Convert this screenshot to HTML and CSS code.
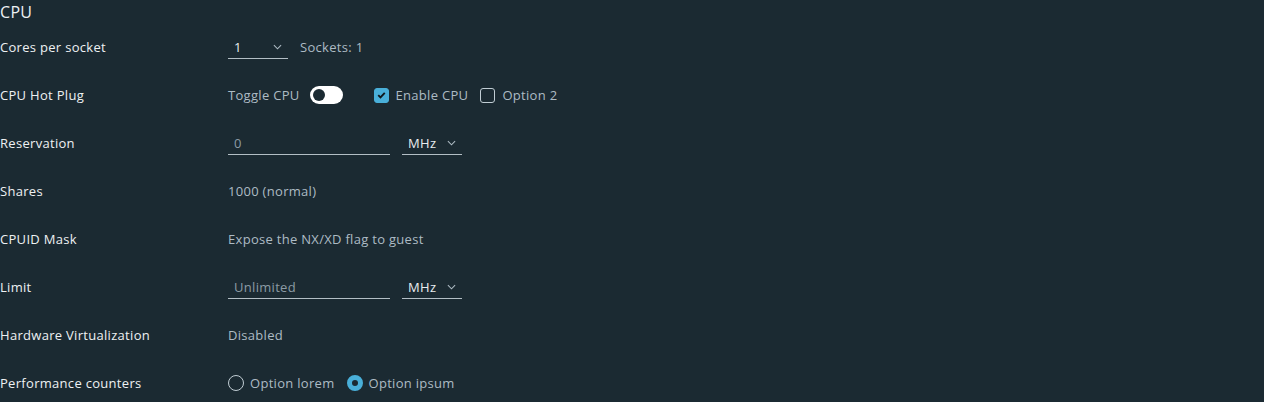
FILE: index.html
```html
<!DOCTYPE html>
<html>
<head>
<meta charset="utf-8">
<link rel="stylesheet" href="styles.css">
</head>
<body>
<h2 class="title">CPU</h2>
<div class="form">
  <div class="row">
    <div class="label">Cores per socket</div>
    <div class="control">
      <div class="select small"><span>1</span><svg class="chev" viewBox="0 0 10 6"><path d="M1 1l4 4 4-4"/></svg></div>
      <span class="text">Sockets: 1</span>
    </div>
  </div>
  <div class="row">
    <div class="label">CPU Hot Plug</div>
    <div class="control">
      <span class="text">Toggle CPU</span>
      <span class="toggle"><span class="knob"></span></span>
      <span class="check-group">
        <span class="checkbox checked"><svg viewBox="0 0 14 14"><path d="M3.5 7.2l2.4 2.4 4.6-5"/></svg></span>
        <span class="text">Enable CPU</span>
      </span>
      <span class="check-group">
        <span class="checkbox"></span>
        <span class="text">Option 2</span>
      </span>
    </div>
  </div>
  <div class="row">
    <div class="label">Reservation</div>
    <div class="control">
      <div class="input"><span class="placeholder">0</span></div>
      <div class="select small unit"><span>MHz</span><svg class="chev" viewBox="0 0 10 6"><path d="M1 1l4 4 4-4"/></svg></div>
    </div>
  </div>
  <div class="row">
    <div class="label">Shares</div>
    <div class="control"><span class="text">1000 (normal)</span></div>
  </div>
  <div class="row">
    <div class="label">CPUID Mask</div>
    <div class="control"><span class="text">Expose the NX/XD flag to guest</span></div>
  </div>
  <div class="row">
    <div class="label">Limit</div>
    <div class="control">
      <div class="input"><span class="placeholder">Unlimited</span></div>
      <div class="select small unit"><span>MHz</span><svg class="chev" viewBox="0 0 10 6"><path d="M1 1l4 4 4-4"/></svg></div>
    </div>
  </div>
  <div class="row">
    <div class="label">Hardware Virtualization</div>
    <div class="control"><span class="text">Disabled</span></div>
  </div>
  <div class="row">
    <div class="label">Performance counters</div>
    <div class="control">
      <span class="radio-group"><span class="radio"></span><span class="text">Option lorem</span></span>
      <span class="radio-group"><span class="radio checked"></span><span class="text">Option ipsum</span></span>
    </div>
  </div>
</div>
</body>
</html>
```
FILE: styles.css
```css
html, body {
  margin: 0;
  padding: 0;
  background: #1b2a32;
}
body {
  font-family: "Open Sans", "Noto Sans", sans-serif;
  font-size: 13px;
  letter-spacing: 0.3px;
  color: #e9ecef;
  width: 1264px;
  height: 402px;
  overflow: hidden;
}
.title {
  margin: 0;
  font-weight: 400;
  font-size: 16px;
  line-height: 24px;
  height: 24px;
  color: #eef1f3;
}
.form {
  display: flex;
  flex-direction: column;
  padding-top: 11px;
}
.row {
  display: flex;
  align-items: center;
  height: 24px;
  margin-bottom: 24px;
}
.label {
  width: 228px;
  flex: none;
  color: #eef1f3;
}
.control {
  display: flex;
  align-items: center;
  color: #adbbc4;
}
.text {
  color: #adbbc4;
}
.select {
  display: flex;
  align-items: center;
  justify-content: space-between;
  width: 60px;
  height: 24px;
  box-sizing: border-box;
  padding: 0 6px;
  border-bottom: 1px solid #b3bec5;
  color: #e9ecef;
  margin-right: 12px;
}
.chev {
  width: 9px;
  height: 6px;
  fill: none;
  stroke: #adbbc4;
  stroke-width: 1.2;
}
.input {
  width: 162px;
  height: 24px;
  box-sizing: border-box;
  padding: 0 6px;
  border-bottom: 1px solid #b3bec5;
  display: flex;
  align-items: center;
  margin-right: 12px;
}
.placeholder {
  color: #8c9ba5;
}
.toggle {
  position: relative;
  width: 33px;
  height: 18px;
  border-radius: 9px;
  background: #ffffff;
  margin-left: 10px;
  margin-right: 31px;
  box-sizing: border-box;
}
.knob {
  position: absolute;
  left: 3px;
  top: 3px;
  width: 12px;
  height: 12px;
  border-radius: 50%;
  background: #1b2a32;
}
.check-group, .radio-group {
  display: flex;
  align-items: center;
  margin-right: 12px;
}
.checkbox {
  width: 15px;
  height: 15px;
  box-sizing: border-box;
  border: 1px solid #c1cdd4;
  border-radius: 3px;
  margin-right: 7px;
  display: flex;
  align-items: center;
  justify-content: center;
}
.checkbox.checked {
  background: #49afd9;
  border-color: #49afd9;
}
.checkbox svg {
  width: 14px;
  height: 14px;
  fill: none;
  stroke: #0f171c;
  stroke-width: 2;
}
.radio {
  width: 16px;
  height: 16px;
  box-sizing: border-box;
  border: 1px solid #c1cdd4;
  border-radius: 50%;
  margin-right: 6px;
}
.radio.checked {
  border: 5px solid #49afd9;
  background: #1b2a32;
}
```
